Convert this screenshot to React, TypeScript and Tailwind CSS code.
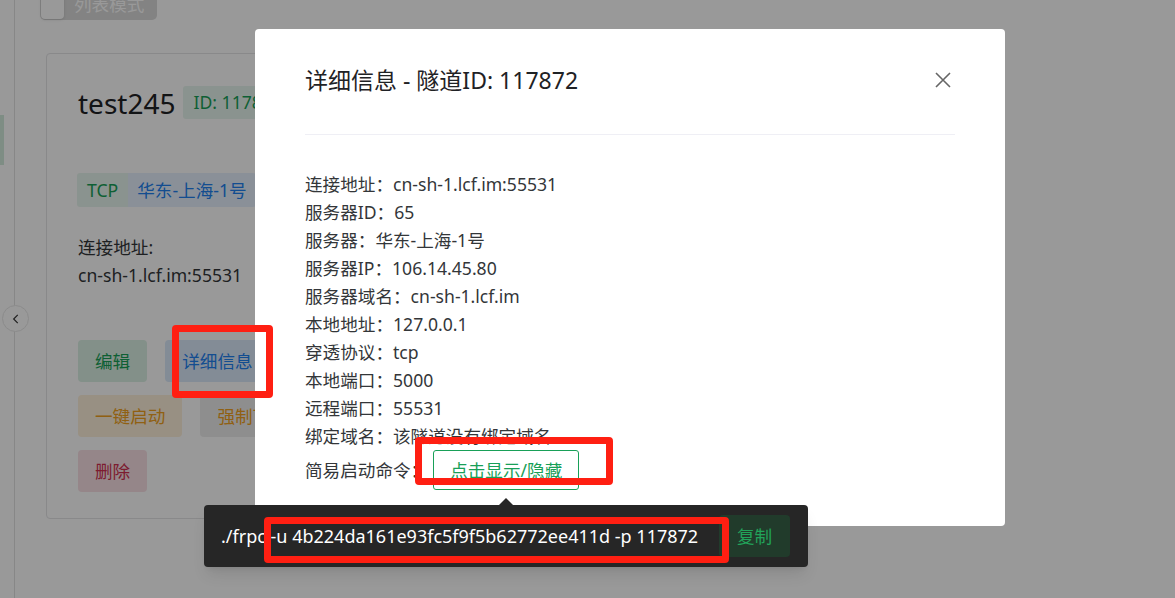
import React from "react";

const font = { fontFamily: '"Noto Sans", "Noto Sans CJK SC", sans-serif' };

const details: [string, string][] = [
  ["连接地址", "cn-sh-1.lcf.im:55531"],
  ["服务器ID", "65"],
  ["服务器", "华东-上海-1号"],
  ["服务器IP", "106.14.45.80"],
  ["服务器域名", "cn-sh-1.lcf.im"],
  ["本地地址", "127.0.0.1"],
  ["穿透协议", "tcp"],
  ["本地端口", "5000"],
  ["远程端口", "55531"],
  ["绑定域名", "该隧道没有绑定域名"],
];

function TunnelCard() {
  return (
    <div className="ml-[6px] mt-[33px] w-[420px] h-[466px] rounded-[4px] border border-[#e4e4e7] bg-white pl-[31px] pt-[32px]">
      <div className="flex items-center h-[33px]">
        <span className="text-[28px] text-[#1f2225] leading-none">test245</span>
        <span className="ml-[8px] h-[33px] flex items-center px-[10px] rounded-[3px] bg-[#e7f5ee] text-[#18a058] text-[17.6px]">
          ID: 117872
        </span>
      </div>
      <div className="mt-[54px] flex h-[34px] -ml-px">
        <span className="flex items-center px-[10px] bg-[#e7f5ee] text-[#18a058] text-[17.6px] rounded-l-[3px]">TCP</span>
        <span className="flex items-center px-[9px] bg-[#e7f1fd] text-[#2080f0] text-[17.6px] rounded-r-[3px]">华东-上海-1号</span>
      </div>
      <div className="mt-[26px] text-[17.6px] leading-[28px] text-[#333639]">
        <div>连接地址:</div>
        <div>cn-sh-1.lcf.im:55531</div>
      </div>
      <div className="mt-[51px] flex flex-col gap-[13px] text-[17.6px]">
        <div className="flex gap-[18px]">
          <button className="h-[42px] px-[17px] rounded-[4px] bg-[#daf0e4] text-[#18a058]">编辑</button>
          <button className="h-[42px] px-[17px] rounded-[4px] bg-[#dbe9fb] text-[#2080f0]">详细信息</button>
        </div>
        <div className="flex gap-[18px]">
          <button className="h-[42px] px-[17px] rounded-[4px] bg-[#fdf0da] text-[#f0a020]">一键启动</button>
          <button className="h-[42px] px-[17px] rounded-[4px] bg-[#ededed] text-[#f0a020]">强制下线</button>
        </div>
        <div className="flex">
          <button className="h-[42px] px-[17px] rounded-[4px] bg-[#f8e0e5] text-[#d03050]">删除</button>
        </div>
      </div>
    </div>
  );
}

export default function App() {
  return (
    <div className="relative w-[1175px] h-[598px] overflow-hidden bg-white" style={font}>
      {/* page behind the modal */}
      <div className="flex h-full">
        <aside className="w-[15px] shrink-0 border-r border-[#e2e2e2] pt-[115px]">
          <div className="w-[4px] h-[50px] bg-[#d3ecdd]" />
        </aside>
        <main className="flex-1 pl-[25px]">
          <div className="-mt-[8px] w-[117px] h-[28px] rounded-[5px] bg-[#dadada] flex items-center pl-[1px]">
            <div className="w-[23px] h-[26px] rounded-[4px] bg-white shadow" />
            <span className="ml-[10px] text-[17.6px] text-white leading-none mt-[-2px]">列表模式</span>
          </div>
          <TunnelCard />
        </main>
      </div>

      {/* sidebar collapse */}
      <div className="absolute left-[2px] top-[305px] w-[27px] h-[27px] rounded-full bg-white border border-[#e8e8e8] flex items-center justify-center">
        <svg width="14" height="14" viewBox="0 0 24 24" fill="none" stroke="#333" strokeWidth="2">
          <path d="M15 5l-7 7 7 7" />
        </svg>
      </div>

      {/* mask */}
      <div className="absolute inset-0 bg-black/40" />

      {/* modal */}
      <div className="absolute left-[255px] top-[29px] w-[750px] h-[497px] rounded-[4px] bg-white px-[50px] pt-[36px] text-[#333639]">
        <div className="flex items-center justify-between h-[30px]">
          <span className="text-[23px] text-[#1f2225]">详细信息 - 隧道ID: 117872</span>
          <svg width="16" height="16" viewBox="0 0 16 16" className="mr-[4px]" stroke="#666" strokeWidth="1.6">
            <path d="M1 1l14 14M15 1L1 15" />
          </svg>
        </div>
        <div className="mt-[39px] border-t border-[#efeff5]" />
        <div className="mt-[35px] text-[17.6px] leading-[28px]">
          {details.map(([k, v]) => (
            <div key={k}>
              {k}：{v}
            </div>
          ))}
          <div className="flex items-center h-[40px]">
            <span>简易启动命令：</span>
            <button className="ml-[5px] h-[40px] px-[16px] rounded-[3px] border border-[#18a058] text-[#18a058] text-[17.6px]">
              点击显示/隐藏
            </button>
          </div>
        </div>
      </div>

      {/* popover */}
      <div className="absolute left-[204px] top-[505px] w-[604px] h-[62px] rounded-[4px] bg-[#262626] shadow-lg flex items-center pl-[17px] pr-[18px]">
        <div className="absolute -top-[7px] left-[295px] w-0 h-0 border-x-[7px] border-x-transparent border-b-[7px] border-b-[#262626]" />
        <span className="flex-1 text-[18px] text-white whitespace-nowrap">
          ./frpc -u 4b224da161e93fc5f9f5b62772ee411d -p 117872
        </span>
        <button className="h-[42px] w-[71px] rounded-[4px] bg-[#213b2b] text-[#22a35a] text-[17.6px]">复制</button>
      </div>

      {/* annotation boxes */}
      <div className="absolute left-[172px] top-[325px] w-[101px] h-[73px] rounded-[4px] border-[7px] border-[#ff1f12]" />
      <div className="absolute left-[415px] top-[437px] w-[198px] h-[48px] rounded-[4px] border-[7px] border-[#ff1f12]" />
      <div className="absolute left-[264px] top-[517px] w-[465px] h-[46px] rounded-[4px] border-[7px] border-[#ff1f12]" />
    </div>
  );
}
